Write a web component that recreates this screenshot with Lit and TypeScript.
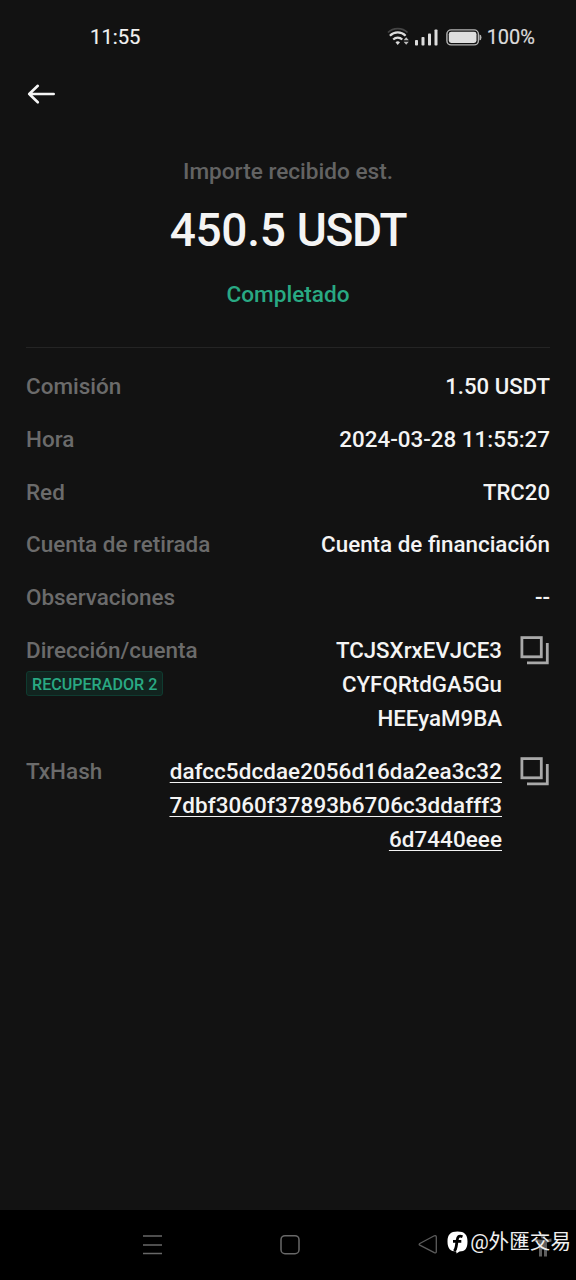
import { LitElement, html, css, nothing } from 'lit';
import { customElement, property } from 'lit/decorators.js';

interface Detail {
  label: string;
  lines: string[];
  tag?: string;
  copy?: boolean;
  kind: 'text' | 'code' | 'address' | 'link';
}

const DETAILS: Detail[] = [
  { label: 'Comisión', lines: ['1.50 USDT'], kind: 'code' },
  { label: 'Hora', lines: ['2024-03-28 11:55:27'], kind: 'text' },
  { label: 'Red', lines: ['TRC20'], kind: 'code' },
  { label: 'Cuenta de retirada', lines: ['Cuenta de financiación'], kind: 'text' },
  { label: 'Observaciones', lines: ['--'], kind: 'code' },
  {
    label: 'Dirección/cuenta',
    lines: ['TCJSXrxEVJCE3', 'CYFQRtdGA5Gu', 'HEEyaM9BA'],
    tag: 'RECUPERADOR 2',
    copy: true,
    kind: 'address',
  },
  {
    label: 'TxHash',
    lines: ['dafcc5dcdae2056d16da2ea3c32', '7dbf3060f37893b6706c3ddafff3', '6d7440eee'],
    copy: true,
    kind: 'link',
  },
];

@customElement('status-bar')
class StatusBar extends LitElement {
  static styles = css`
    :host {
      display: flex;
      align-items: center;
      justify-content: space-between;
      height: 74px;
      padding: 0 41px 0 90px;
      box-sizing: border-box;
      color: #f2f2f2;
      font-size: 20.500px;
      font-weight: 400;
      line-height: 24px;
    }
    .time { font-size: 20.300px; -webkit-text-stroke: 0.150px #f2f2f2; }
    .right { display: flex; align-items: center; color: #dcdcdc; }
    .level { font-size: 20px; -webkit-text-stroke: 0.200px #dcdcdc; }
    .wifi { margin-right: 4px; }
    .signal { margin-right: 8px; }
    .battery { margin-right: 5px; }
    svg { display: block; }
  `;
  render() {
    return html`
      <span class="time">11:55</span>
      <div class="right">
        <svg class="wifi" width="24" height="20" viewBox="0 0 24 20" fill="none">
          <path d="M1 5.500C6 .2 15.500 .2 20.500 5.500" stroke="#444" stroke-width="1.800" />
          <path d="M2.900 8.800C7.300 4.300 14.200 4.300 18.600 8.800" stroke="#dcdcdc" stroke-width="2.200" />
          <path d="M6.200 12.500C8.800 10 12.700 10 15.300 12.500" stroke="#dcdcdc" stroke-width="2.200" />
          <path d="M8.500 15.300Q10.700 13.400 13 15.300L10.700 18Z" fill="#dcdcdc" />
          <path d="M16.600 13.200L19.200 10.200L21.800 13.200ZM16.600 14.800H21.800L19.200 17.800Z" fill="#bdbdbd" />
        </svg>
        <svg class="signal" width="23" height="18" viewBox="0 0 23 18" fill="#dcdcdc">
          <rect x="0" y="12" width="3" height="5.500" rx=".8" />
          <rect x="6.500" y="9" width="3" height="8.500" rx=".8" />
          <rect x="13" y="5.500" width="3" height="12" rx=".8" />
          <rect x="19.500" y="1.500" width="3" height="16" rx=".8" />
        </svg>
        <svg class="battery" width="36" height="17" viewBox="0 0 36 17">
          <rect x=".9" y=".9" width="31.500" height="15" rx="4.200" fill="none" stroke="#b4b4b4" stroke-width="1.400" />
          <rect x="2.800" y="2.800" width="27.700" height="11.200" rx="2.400" fill="#dedede" />
          <path d="M33.500 5.500Q35.500 5.700 35.500 8.400T33.500 11.300Z" fill="#b4b4b4" />
        </svg>
        <span class="level">100%</span>
      </div>
    `;
  }
}

@customElement('detail-row')
class DetailRow extends LitElement {
  @property({ attribute: false }) detail!: Detail;
  static styles = css`
    :host { display: flex; justify-content: space-between; line-height: 34.200px; }
    .key {
      display: flex;
      flex-direction: column;
      align-items: flex-start;
      color: #6b6b6b;
      font-size: 22.450px;
    }
    .tag {
      box-sizing: border-box;
      height: 25px;
      margin-top: 4px;
      padding: 0 5px;
      border: 1px solid #0f3b30;
      border-radius: 3px;
      background: #11241f;
      color: #29a983;
      font-size: 16.100px;
      line-height: 25px;
    }
    .side { display: flex; align-items: flex-start; gap: 18px; color: #f4f4f4; }
    .value { display: flex; flex-direction: column; align-items: flex-end; }
    .code { font-size: 22.150px; }
    .text { font-size: 22.400px; }
    .address { font-size: 22.300px; }
    .link {
      font-size: 22.450px;
      letter-spacing: 0.070px;
      text-decoration: underline;
      text-decoration-thickness: 1.300px;
      text-underline-offset: 3px;
      text-decoration-skip-ink: none;
    }
    .copy { display: block; margin-top: 3px; }
  `;
  render() {
    const d = this.detail;
    return html`
      <div class="key">
        <span>${d.label}</span>
        ${d.tag ? html`<span class="tag">${d.tag}</span>` : nothing}
      </div>
      <div class="side">
        <div class="value">
          ${d.lines.map((l) => html`<span class=${d.kind}>${l}</span>`)}
        </div>
        ${d.copy
          ? html`<svg class="copy" width="30" height="29" viewBox="0 0 30 29" fill="none" stroke="#a9a9a9" stroke-width="2.800">
              <rect x="1.900" y="1.600" width="19.400" height="19.200" />
              <path d="M7 26.900H27.300V7" />
            </svg>`
          : nothing}
      </div>
    `;
  }
}

@customElement('nav-bar')
class NavBar extends LitElement {
  static styles = css`
    :host { display: block; position: relative; height: 70px; background: #000; }
    .keys { display: grid; grid-template-columns: 166px 110px 164px 1fr; height: 70px; align-items: center; }
    svg { display: block; }
    .menu { margin-left: 142px; }
    .home { margin-left: 113px; }
    .back { margin-left: 141px; }
    .access { margin-left: 94px; }
    .mark {
      position: absolute;
      right: 5px;
      top: 18px;
      display: flex;
      align-items: center;
      gap: 2px;
      color: #f0f0f0;
      font: 400 20.600px/28px Roboto, 'Noto Sans CJK TC', sans-serif;
      white-space: nowrap;
    }
  `;
  render() {
    return html`
      <div class="keys">
        <svg class="menu" width="21" height="22" viewBox="0 0 21 22" stroke="#686868" stroke-width="1.600">
          <path d="M1 2H20M1 11H20M1 19.500H20" />
        </svg>
        <svg class="home" width="22" height="22" viewBox="0 0 22 22" fill="none" stroke="#686868" stroke-width="1.500">
          <rect x="2" y="1.700" width="18" height="18" rx="4" />
        </svg>
        <svg class="back" width="22" height="22" viewBox="0 0 22 22" fill="none" stroke="#5c5c5c" stroke-width="1.300" stroke-linejoin="round">
          <path d="M2.800 9.500L17.300 1.800Q19.300 1.200 19.300 3.200V17.500Q19.300 19.500 17.300 18.700L2.800 11.200Q1.500 10.400 2.800 9.500Z" />
        </svg>
        <svg class="access" width="18" height="24" viewBox="0 0 18 24" fill="#5e5e5e">
          <circle cx="9" cy="3.500" r="2.300" />
          <path d="M.5 5.500Q9 8 17.500 5.500V8.500L13 9.500V23.500H10V16.500H8V23.500H5V9.500L.5 8.500Z" />
        </svg>
      </div>
      <div class="mark">
        <svg width="21" height="23" viewBox="0 0 21 23">
          <path d="M10.500 .5C17.500 .5 20.500 3.500 20.500 10.500C20.500 17.500 18 20.500 12.500 20.500L9.500 22.500L9.300 20.500C3.500 20.500 .5 17.500 .5 10.500C.5 3.500 3.500 .5 10.500 .5Z" fill="#fff" />
          <path d="M15.500 5.700C12 4.300 10.700 5.500 10.200 9L9.200 15.500Q8.900 18 7.300 20M6 10.300H14.300" fill="none" stroke="#000" stroke-width="2.800" />
        </svg>
        <span>@外匯交易</span>
      </div>
    `;
  }
}

@customElement('app-root')
class AppRoot extends LitElement {
  static styles = css`
    :host {
      display: flex;
      flex-direction: column;
      box-sizing: border-box;
      width: 100%;
      height: 1280px;
      overflow: hidden;
      background: #121212;
      font-family: Roboto, sans-serif;
      font-size: 22px;
      font-weight: 500;
    }
    .top { height: 66px; padding: 9px 0 0 27px; box-sizing: border-box; }
    .top svg { display: block; }
    .summary { display: flex; flex-direction: column; align-items: center; height: 207px; }
    .caption { margin-top: 18px; font-size: 22.600px; line-height: 28px; color: #636363; }
    .amount { margin-top: 16px; font-size: 46px; line-height: 56px; color: #f4f4f4; letter-spacing: -0.300px; }
    .unit { letter-spacing: -1.300px; }
    .state { margin-top: 23px; font-size: 22.600px; line-height: 28px; color: #29a983; }
    .details {
      display: flex;
      flex-direction: column;
      flex: 1;
      gap: 18.550px;
      margin: 0 26px;
      padding-top: 21.100px;
      border-top: 1px solid #242424;
    }
  `;
  render() {
    return html`
      <status-bar></status-bar>
      <div class="top">
        <svg width="30" height="22" viewBox="0 0 30 22" fill="none" stroke="#f5f5f5" stroke-width="2.600" stroke-linecap="round" stroke-linejoin="round">
          <path d="M10.800 2.800L2.200 11L10.800 19.300M2.200 11H26.700" />
        </svg>
      </div>
      <div class="summary">
        <div class="caption">Importe recibido est.</div>
        <div class="amount">450.5 <span class="unit">USDT</span></div>
        <div class="state">Completado</div>
      </div>
      <div class="details">
        ${DETAILS.map((d) => html`<detail-row .detail=${d}></detail-row>`)}
      </div>
      <nav-bar></nav-bar>
    `;
  }
}
